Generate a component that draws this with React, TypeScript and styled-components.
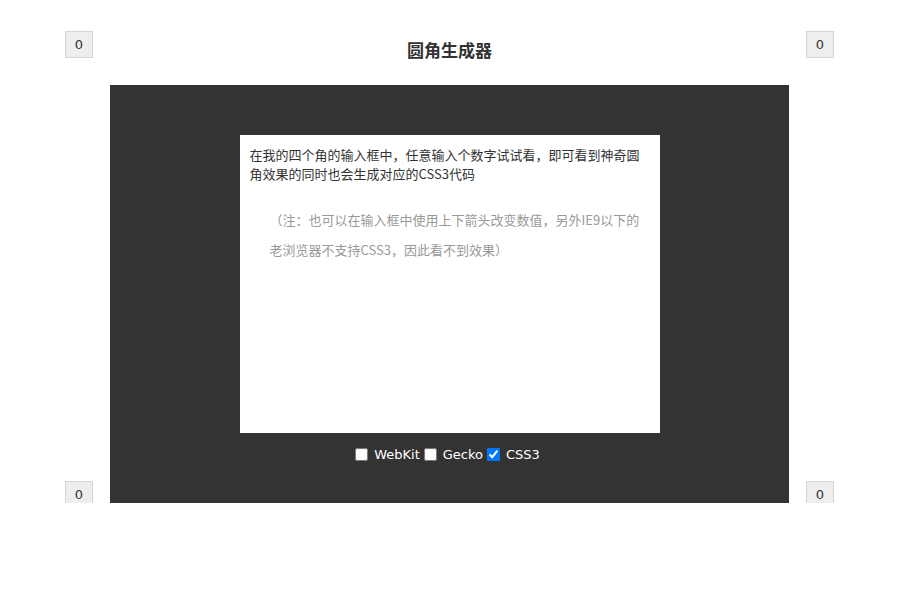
import React from "react";
import styled, { createGlobalStyle } from "styled-components";

const Global = createGlobalStyle`
  body { margin: 0; background: #fff; font-family: "Noto Sans CJK SC", "Liberation Sans", sans-serif; }
`;
const Wrap = styled.div`
  width: 769px; padding: 31px 0 0 65px;
`;
const TopRow = styled.div`
  display: flex; align-items: flex-start; justify-content: space-between; height: 54px;
`;
const Title = styled.h1`
  margin: 7px 0 0; font-size: 17px; font-weight: bold; color: #333; line-height: 24px;
`;
const Corner = styled.input`
  width: 28px; height: 27px; box-sizing: border-box; border: 1px solid #d5d5d5; background: #eee;
  text-align: center; font-size: 13px; color: #333; padding: 0; font-family: "DejaVu Sans", sans-serif;
  align-self: ${(p: { $bottom?: boolean }) => (p.$bottom ? "flex-end" : "flex-start")};
  margin-bottom: ${(p: { $bottom?: boolean }) => (p.$bottom ? "-5px" : "0")};
`;
const MidRow = styled.div`
  display: flex; align-items: flex-end; gap: 17px;
`;
const Stage = styled.div`
  width: 680px; height: 418px; background: #333; box-sizing: border-box; padding-top: 50px;
  display: flex; flex-direction: column; align-items: center;
`;
const Card = styled.div`
  width: 420px; height: 298px; background: #fff; box-sizing: border-box; padding: 10px 10px;
  font-size: 13px; color: #333; line-height: 19px;
`;
const Note = styled.p`
  margin: 22px 0 0; padding: 0 4px 0 20px; color: #999; line-height: 30px;
`;
const Options = styled.div`
  margin-top: 14px; display: flex; align-items: center; color: #fff; font-size: 13px;
  font-family: "DejaVu Sans", sans-serif;
  label { display: flex; align-items: center; margin-right: 4px; }
  input { margin: 0 6px 0 0; width: 13px; height: 13px; }
`;

export default function App() {
  return (
    <>
      <Global />
      <Wrap>
        <TopRow>
          <Corner defaultValue="0" />
          <Title>圆角生成器</Title>
          <Corner defaultValue="0" />
        </TopRow>
        <MidRow>
          <Corner $bottom defaultValue="0" />
          <Stage>
            <Card>
              在我的四个角的输入框中，任意输入个数字试试看，即可看到神奇圆角效果的同时也会生成对应的CSS3代码
              <Note>（注：也可以在输入框中使用上下箭头改变数值，另外IE9以下的老浏览器不支持CSS3，因此看不到效果）</Note>
            </Card>
            <Options>
              <label><input type="checkbox" />WebKit</label>
              <label><input type="checkbox" />Gecko</label>
              <label><input type="checkbox" defaultChecked />CSS3</label>
            </Options>
          </Stage>
          <Corner $bottom defaultValue="0" />
        </MidRow>
      </Wrap>
    </>
  );
}
